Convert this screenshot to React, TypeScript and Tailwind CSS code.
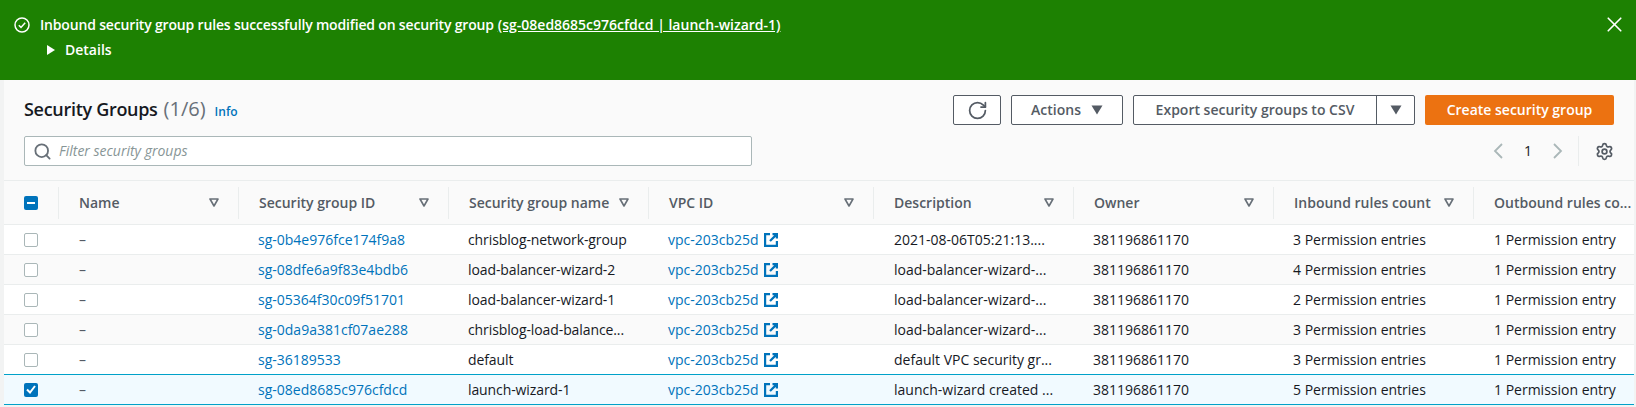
import React from "react";
import { RotateCw, Settings, Search, X } from "lucide-react";

const rows = [
  ["sg-0b4e976fce174f9a8", "chrisblog-network-group", "2021-08-06T05:21:13....", "3 Permission entries"],
  ["sg-08dfe6a9f83e4bdb6", "load-balancer-wizard-2", "load-balancer-wizard-...", "4 Permission entries"],
  ["sg-05364f30c09f51701", "load-balancer-wizard-1", "load-balancer-wizard-...", "2 Permission entries"],
  ["sg-0da9a381cf07ae288", "chrisblog-load-balance...", "load-balancer-wizard-...", "3 Permission entries"],
  ["sg-36189533", "default", "default VPC security gr...", "3 Permission entries"],
  ["sg-08ed8685c976cfdcd", "launch-wizard-1", "launch-wizard created ...", "5 Permission entries"],
];

const cols = ["w-[180px]", "w-[210px]", "w-[200px]", "w-[225px]", "w-[200px]", "w-[200px]", "w-[200px]"];

function FilterIcon() {
  return (
    <svg width="10" height="9" viewBox="0 0 10 9" className="shrink-0">
      <path d="M1 1h8L5 8z" fill="none" stroke="#687078" strokeWidth="1.6" strokeLinejoin="round" />
    </svg>
  );
}

function Caret() {
  return (
    <svg width="12" height="10" viewBox="0 0 12 10">
      <path d="M0.5 0.5h11L6 9.5z" fill="#545b64" />
    </svg>
  );
}

function ExternalIcon() {
  return (
    <svg width="14" height="14" viewBox="0 0 14 14" className="ml-[5px] shrink-0" fill="none" stroke="#0073bb" strokeWidth="2.2">
      <path d="M6 1.1H1.1v11.8h11.8V8" />
      <path d="M8.5 1.1h4.4v4.4M12.9 1.1 6 8" />
    </svg>
  );
}

function HeadCell({ label, className }: { label: string; className: string }) {
  return (
    <div className={`${className} shrink-0 h-[32px] border-r border-[#eaeded] pl-[20px] pr-[19px] flex items-center justify-between`}>
      <span className="font-semibold text-[#545b64] whitespace-nowrap">{label}</span>
      <FilterIcon />
    </div>
  );
}

export default function App() {
  return (
    <div className="h-[407px] overflow-hidden bg-[#f2f3f3] text-[14px] text-[#16191f] font-['Open_Sans','Liberation_Sans',sans-serif] leading-[20px]">
      <div className="h-[80px] bg-[#1d8102] text-white flex justify-between pl-[14px] pr-[9px] pt-[15px]">
        <div>
          <div className="flex items-center h-[20px]">
            <svg width="16" height="16" viewBox="0 0 16 16" fill="none" stroke="white" strokeWidth="1.5" className="mr-[10px]">
              <circle cx="8" cy="8" r="7" />
              <path d="M4.8 8.2 7 10.4l4.2-4.6" />
            </svg>
            <span className="font-semibold tracking-[-0.17px]">Inbound security group rules successfully modified on security group</span>
            <a className="font-semibold underline ml-[4px]">(sg-08ed8685c976cfdcd | launch-wizard-1)</a>
          </div>
          <div className="flex items-center h-[20px] mt-[5px] pl-[33px]">
            <svg width="8" height="10" viewBox="0 0 8 10" className="mr-[10px]">
              <path d="M0 0l8 5-8 5z" fill="white" />
            </svg>
            <span className="font-semibold">Details</span>
          </div>
        </div>
        <X size={25} strokeWidth={1.6} className="mt-[-3px]" />
      </div>

      <div className="ml-[4px] mr-[2px] bg-[#fafafa]">
        <div className="pt-[15px] pl-[20px] pr-[20px] h-[101px] border-b border-[#eaeded]">
          <div className="flex justify-between items-center h-[30px]">
            <div className="flex items-baseline">
              <span className="font-semibold text-[18px] leading-[22px] tracking-[-0.3px]">Security Groups</span>
              <span className="text-[20px] leading-[22px] text-[#687078] ml-[6px]">(1/6)</span>
              <a className="font-semibold text-[12px] text-[#0073bb] ml-[9px]">Info</a>
            </div>
            <div className="flex gap-[10px] font-semibold text-[#545b64]">
              <button className="w-[48px] h-[30px] border border-[#545b64] rounded-[2px] flex items-center justify-center bg-white">
                <RotateCw size={21} strokeWidth={2} className="text-[#545b64]" />
              </button>
              <button className="w-[112px] h-[30px] border border-[#545b64] rounded-[2px] flex items-center justify-center gap-[10px] bg-white font-semibold">
                Actions <Caret />
              </button>
              <div className="flex h-[30px] border border-[#545b64] rounded-[2px] bg-white">
                <button className="w-[243px] border-r border-[#545b64] font-semibold">Export security groups to CSV</button>
                <button className="w-[37px] flex items-center justify-center"><Caret /></button>
              </div>
              <button className="w-[189px] h-[30px] rounded-[2px] bg-[#ec7211] text-white font-semibold">Create security group</button>
            </div>
          </div>
          <div className="flex justify-between items-center mt-[11px] h-[30px]">
            <div className="w-[728px] h-[30px] border border-[#aab7b8] rounded-[2px] bg-white flex items-center pl-[8px] gap-[7px]">
              <Search size={19} strokeWidth={2.3} className="text-[#687078]" />
              <span className="italic text-[#879596]">Filter security groups</span>
            </div>
            <div className="flex items-center h-[30px] text-[#16191f]">
              <svg width="10" height="16" viewBox="0 0 10 16" fill="none" stroke="#aab7b8" strokeWidth="1.8"><path d="M9 1 2 8l7 7" /></svg>
              <span className="w-[50px] text-center font-medium">1</span>
              <svg width="10" height="16" viewBox="0 0 10 16" fill="none" stroke="#aab7b8" strokeWidth="1.8"><path d="M1 1l7 7-7 7" /></svg>
              <div className="w-px h-[30px] bg-[#eaeded] ml-[15px] mr-[16px]" />
              <Settings size={19} strokeWidth={2.2} className="text-[#545b64]" />
            </div>
          </div>
        </div>

        <div className="h-[43px] flex items-center pl-[20px] overflow-hidden whitespace-nowrap">
          <div className="w-[35px] shrink-0 h-[32px] border-r border-[#eaeded] flex items-center">
            <span className="w-[14px] h-[14px] rounded-[2px] bg-[#0073bb] flex items-center justify-center">
              <span className="w-[8px] h-[2px] bg-white" />
            </span>
          </div>
          {["Name", "Security group ID", "Security group name", "VPC ID", "Description", "Owner", "Inbound rules count"].map((h, i) => (
            <HeadCell key={h} label={h} className={cols[i]} />
          ))}
          <span className="font-semibold text-[#545b64] pl-[20px] shrink-0">Outbound rules co...</span>
        </div>

        {rows.map((r, i) => {
          const sel = i === 5;
          return (
            <div
              key={r[0]}
              className={`flex items-center overflow-hidden whitespace-nowrap pl-[20px] border-t ${
                sel
                  ? "h-[31px] border-y border-[#00a1c9] bg-[#f1faff]"
                  : `h-[30px] border-[#eaeded] ${i % 2 ? "bg-[#fafafa]" : "bg-white"}`
              }`}
            >
              <div className="w-[35px] shrink-0 flex items-center">
                {sel ? (
                  <span className="w-[14px] h-[14px] rounded-[2px] bg-[#0073bb] flex items-center justify-center">
                    <svg width="10" height="9" viewBox="0 0 10 9" fill="none" stroke="white" strokeWidth="2"><path d="M1 4.5 4 7.5 9 1" /></svg>
                  </span>
                ) : (
                  <span className="w-[14px] h-[14px] rounded-[2px] border border-[#aab7b8] bg-white" />
                )}
              </div>
              <div className="w-[180px] shrink-0 pl-[20px] text-[#545b64]">–</div>
              <a className="w-[210px] shrink-0 pl-[19px] text-[#0073bb]">{r[0]}</a>
              <div className="w-[200px] shrink-0 pl-[19px] tracking-[-0.1px]">{r[1]}</div>
              <div className="w-[225px] shrink-0 pl-[19px] flex items-center text-[#0073bb]">vpc-203cb25d<ExternalIcon /></div>
              <div className="w-[200px] shrink-0 pl-[20px]">{r[2]}</div>
              <div className="w-[200px] shrink-0 pl-[19px]">381196861170</div>
              <div className="w-[200px] shrink-0 pl-[19px]">{r[3]}</div>
              <div className="shrink-0 pl-[20px]">1 Permission entry</div>
            </div>
          );
        })}
      </div>
    </div>
  );
}
